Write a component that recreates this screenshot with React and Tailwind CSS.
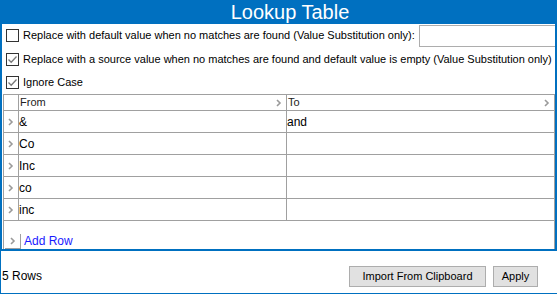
import React from "react";

const rows = ["&", "Co", "Inc", "co", "inc"];
const toVals = ["and", "", "", "", ""];

function Chevron({ className = "" }) {
  return (
    <svg width="6" height="8" viewBox="0 0 6 8" className={className}>
      <path d="M1 1 L4 4 L1 7" fill="none" stroke="#9a9a9a" strokeWidth="1.6" />
    </svg>
  );
}

function Check({ checked }) {
  return (
    <span className="w-[13px] h-[13px] border border-[#333] bg-white flex items-center justify-center shrink-0">
      {checked && (
        <svg width="11" height="11" viewBox="0 0 11 11">
          <path d="M1.5 5.5 L4.2 8.3 L9.5 2.5" fill="none" stroke="#7a7a7a" strokeWidth="1.3" />
        </svg>
      )}
    </span>
  );
}

export default function App() {
  return (
    <div
      className="w-[557px] h-[294px] bg-[#0070c0] flex flex-col px-[2px] pb-[1px] text-[11px] text-black whitespace-nowrap"
      style={{ fontFamily: "'Liberation Sans', Arial, sans-serif" }}
    >
      <div className="h-[24px] shrink-0 flex items-center justify-center text-white text-[20px] pl-[23px]">
        Lookup Table
      </div>
      <div className="bg-white flex-1 flex flex-col">
        <div className="flex items-center h-[22px] pl-[4px] gap-[4px]">
          <Check />
          <span>Replace with default value when no matches are found (Value Substitution only):</span>
          <div className="ml-auto w-[141px] h-[22px] border border-[#adadad] border-r-0 bg-white mt-[1px]" />
        </div>
        <div className="flex items-center h-[24px] pl-[4px] gap-[4px] mt-[1px]">
          <Check checked />
          <span>Replace with a source value when no matches are found and default value is empty (Value Substitution only)</span>
        </div>
        <div className="flex items-center h-[22px] pl-[4px] gap-[4px]">
          <Check checked />
          <span>Ignore Case</span>
        </div>
        <div className="flex-1 flex flex-col border-x border-[#a0a0a0] ml-[1px] mt-[1px]">
          <div className="flex h-[17px] border-y border-[#a0a0a0]">
            <div className="w-[15px] border-r border-[#a0a0a0]" />
            <div className="w-[268px] border-r border-[#a0a0a0] flex items-center pl-[1px] pr-[4px] text-[#222]">
              <span>From</span>
              <Chevron className="ml-auto" />
            </div>
            <div className="flex-1 flex items-center pl-[1px] pr-[4px] text-[#222]">
              <span>To</span>
              <Chevron className="ml-auto" />
            </div>
          </div>
          {rows.map((r, i) => (
            <div key={i} className="flex h-[22px] border-b border-[#a0a0a0] text-[12px]">
              <div className="w-[15px] border-r border-[#a0a0a0] flex items-center justify-center">
                <Chevron />
              </div>
              <div className="w-[268px] border-r border-[#a0a0a0] flex items-center">{r}</div>
              <div className="flex-1 flex items-center">{toVals[i]}</div>
            </div>
          ))}
          <div className="flex-1 flex items-end pl-[1px]">
            <div className="w-[16px] h-[15px] border-r border-b border-[#a0a0a0] bg-white flex items-center justify-center">
              <Chevron />
            </div>
            <span className="text-[#1a1aff] text-[12px] pl-[3px] leading-[15px]">Add Row</span>
          </div>
        </div>
        <div className="h-[44px] shrink-0 border-t-2 border-[#0070c0] flex items-center -mx-[2px] pl-[1px] pr-[19px] bg-white border-l border-l-[#0070c0]">
          <span className="mt-[8px] text-[12px]">5 Rows</span>
          <button className="ml-auto mt-[8px] h-[21px] w-[137px] bg-[#e1e1e1] border border-[#adadad]">
            Import From Clipboard
          </button>
          <button className="ml-[7px] mt-[8px] h-[21px] w-[45px] bg-[#e1e1e1] border border-[#adadad]">
            Apply
          </button>
        </div>
      </div>
    </div>
  );
}
